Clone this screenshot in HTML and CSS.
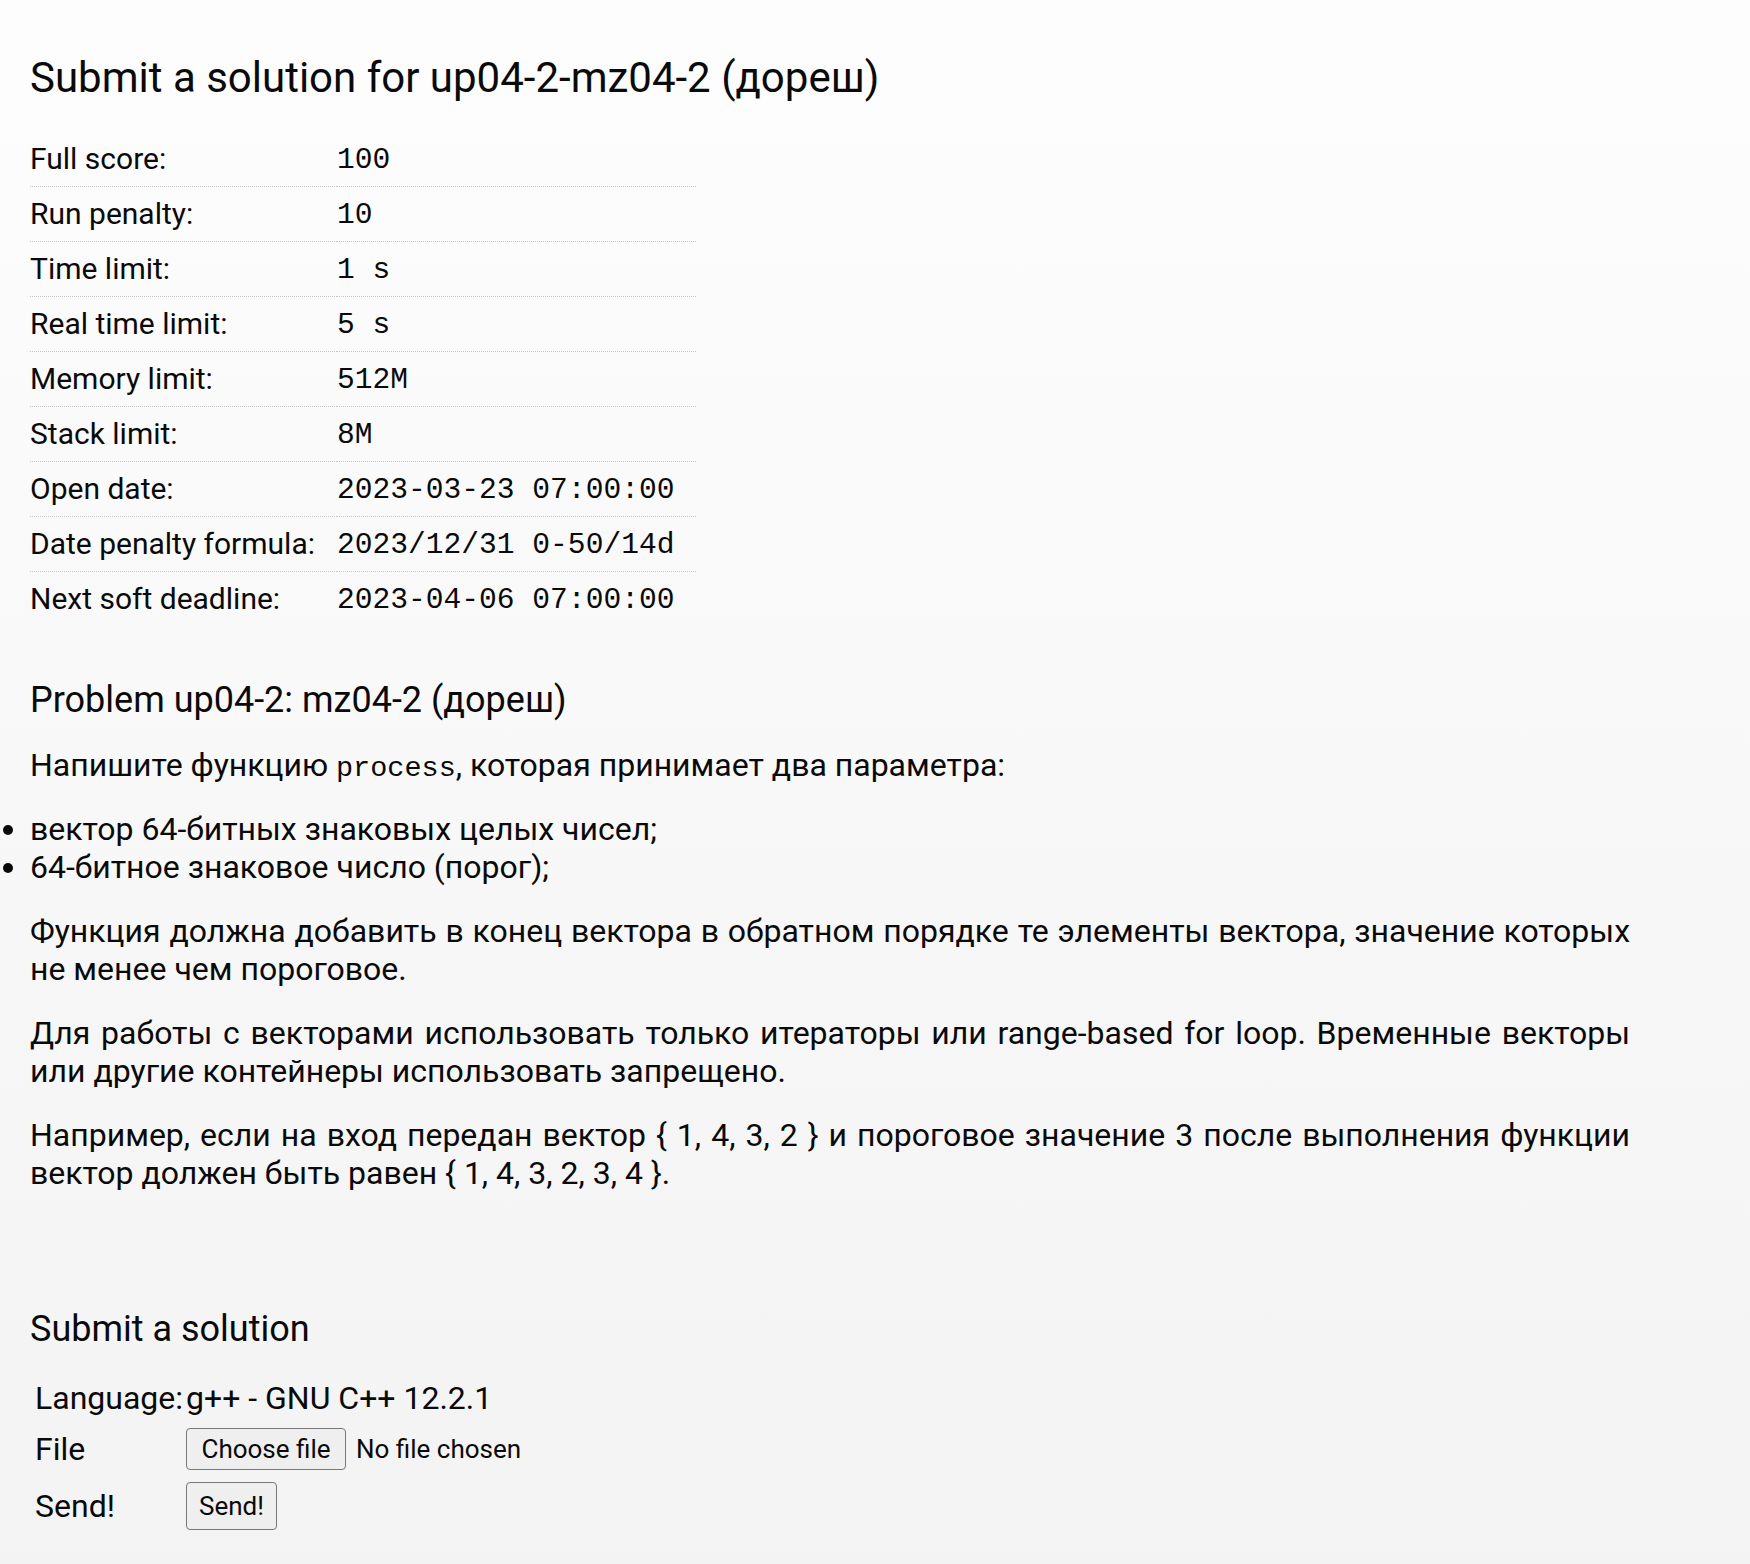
FILE: index.html
```html
<!DOCTYPE html>
<html lang="en">
<head>
<meta charset="utf-8">
<title>Submit a solution for up04-2-mz04-2 (дореш)</title>
<link rel="stylesheet" href="styles.css">
</head>
<body>
<main class="page">
  <h1 class="title">Submit a solution for up04-2-mz04-2 (дореш)</h1>
  <table class="info">
    <tbody>
      <tr><td class="k">Full score:</td><td class="v">100</td></tr>
      <tr><td class="k">Run penalty:</td><td class="v">10</td></tr>
      <tr><td class="k">Time limit:</td><td class="v">1 s</td></tr>
      <tr><td class="k">Real time limit:</td><td class="v">5 s</td></tr>
      <tr><td class="k">Memory limit:</td><td class="v">512M</td></tr>
      <tr><td class="k">Stack limit:</td><td class="v">8M</td></tr>
      <tr><td class="k">Open date:</td><td class="v">2023-03-23 07:00:00</td></tr>
      <tr><td class="k">Date penalty formula:</td><td class="v">2023/12/31 0-50/14d</td></tr>
      <tr><td class="k">Next soft deadline:</td><td class="v">2023-04-06 07:00:00</td></tr>
    </tbody>
  </table>

  <h2 class="subtitle">Problem up04-2: mz04-2 (дореш)</h2>
  <div class="statement">
    <p class="lead">Напишите функцию <code>process</code>, которая принимает два параметра:</p>
    <ul class="params">
      <li>вектор 64-битных знаковых целых чисел;</li>
      <li>64-битное знаковое число (порог);</li>
    </ul>
    <p>Функция должна добавить в конец вектора в обратном порядке те элементы вектора, значение которых не менее чем пороговое.</p>
    <p>Для работы с векторами использовать только итераторы или range-based for loop. Временные векторы или другие контейнеры использовать запрещено.</p>
    <p>Например, если на вход передан вектор { 1, 4, 3, 2 } и пороговое значение 3 после выполнения функции вектор должен быть равен { 1, 4, 3, 2, 3, 4 }.</p>
  </div>

  <h2 class="subtitle submit-title">Submit a solution</h2>
  <form class="submit">
    <table class="form">
      <tbody>
        <tr><td class="fk">Language:</td><td class="fv">g++ - GNU C++ 12.2.1</td></tr>
        <tr><td class="fk">File</td><td class="fv"><span class="file"><button type="button" class="btn btn-file">Choose file</button><span class="nofile">No file chosen</span></span></td></tr>
        <tr><td class="fk">Send!</td><td class="fv"><button type="button" class="btn btn-send">Send!</button></td></tr>
      </tbody>
    </table>
  </form>
</main>
</body>
</html>
```

FILE: styles.css
```css
html {
  min-height: 100%;
  background: linear-gradient(#fdfdfd, #f3f3f3);
}
body {
  margin: 0;
  min-height: 1564px;
  font-family: Roboto, "Noto Sans", sans-serif;
  color: #0a0a0a;
  font-size: 32px;
}
.page {
  width: 1600px;
  padding: 54px 0 0 30px;
}
.title {
  font-size: 42px;
  font-weight: 400;
  line-height: 48px;
  margin: 0 0 30px;
}
.info {
  border-collapse: collapse;
  border-spacing: 0;
}
.info td {
  padding: 8px 22px 9px 0;
  font-size: 30px;
  line-height: 37px;
  vertical-align: top;
  border-bottom: 1px dotted #c8c8c8;
}
.info tr:last-child td {
  border-bottom: none;
}
.info td.v {
  font-family: "Liberation Mono", monospace;
  font-size: 29.6px;
  padding-top: 10px;
  padding-bottom: 7px;
}
.subtitle {
  font-size: 36px;
  font-weight: 400;
  line-height: 42px;
  margin: 53px 0 25px;
}
.statement {
  text-align: justify;
  line-height: 38px;
}
.statement p {
  margin: 0 0 26px;
}
.statement p.lead {
  margin-bottom: 22px;
}
code {
  font-family: "Liberation Mono", monospace;
  font-size: 28.5px;
}
.params {
  margin: 0 0 26px;
  padding: 0;
  list-style: disc outside;
}
.submit-title {
  margin: 116px 0 22px;
}
.form {
  border-collapse: separate;
  border-spacing: 2px;
}
.form td {
  padding: 5px 3px;
  vertical-align: middle;
  line-height: normal;
}
.form tr:first-child td {
  padding-bottom: 4px;
}
.form td.fk {
  padding-right: 0;
}
.form td.fv {
  padding-left: 1px;
}
.file {
  display: inline-flex;
  align-items: center;
  gap: 10px;
  font-size: 26px;
}
.btn {
  display: block;
  font-family: Roboto, "Noto Sans", sans-serif;
  color: #0a0a0a;
  background: #efefef;
  border: 1.5px solid #777;
  border-radius: 4px;
  font-size: 26px;
  line-height: 30px;
  padding: 0;
}
.btn-file {
  width: 160px;
  height: 42px;
}
.btn-send {
  width: 91px;
  height: 48px;
}
```
